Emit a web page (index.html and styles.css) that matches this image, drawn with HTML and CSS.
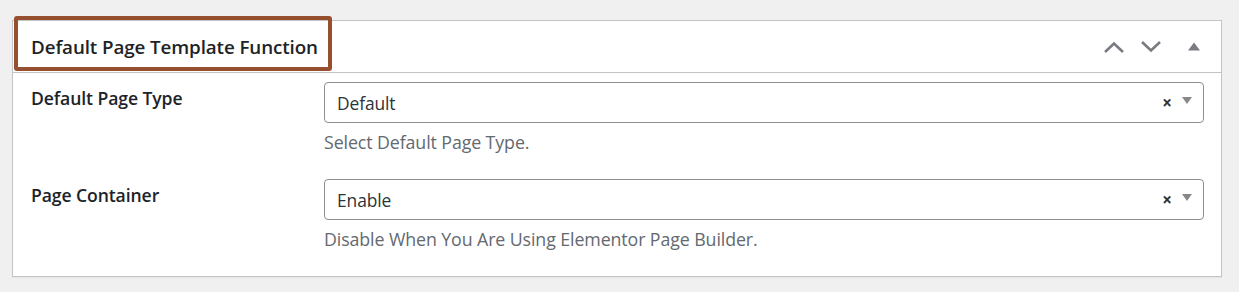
FILE: index.html
```html
<!DOCTYPE html>
<html>

<head>
    <link rel="stylesheet" href="styles.css">
</head>

<body>
    <div class="postbox">
        <div class="postboxHeader">
            <h2 class="boxTitle">Default Page Template Function</h2>
            <div class="handleActions">
                <button class="handleButton" type="button" aria-label="Move up">
                    <svg width="22" height="14" viewBox="0 0 22 14"><path d="M2 12 L11 3.5 L20 12" fill="none" stroke="#787c82" stroke-width="2.6"/></svg>
                </button>
                <button class="handleButton" type="button" aria-label="Move down">
                    <svg width="22" height="14" viewBox="0 0 22 14"><path d="M2 2 L11 10.5 L20 2" fill="none" stroke="#787c82" stroke-width="2.6"/></svg>
                </button>
                <button class="handleButton toggle" type="button" aria-label="Toggle panel">
                    <svg width="12" height="9" viewBox="0 0 12 9"><path d="M0 8.5 L6 0.5 L12 8.5 Z" fill="#787c82"/></svg>
                </button>
            </div>
            <span class="highlightFrame"></span>
        </div>

        <div class="postboxInside">
            <div class="fieldRow">
                <label class="fieldLabel">Default Page Type</label>
                <div class="fieldControl">
                    <div class="selectBox">
                        <span class="selectValue">Default</span>
                        <span class="selectClear">&times;</span>
                        <span class="selectArrow"></span>
                    </div>
                    <p class="description">Select Default Page Type.</p>
                </div>
            </div>

            <div class="fieldRow">
                <label class="fieldLabel">Page Container</label>
                <div class="fieldControl">
                    <div class="selectBox">
                        <span class="selectValue">Enable</span>
                        <span class="selectClear">&times;</span>
                        <span class="selectArrow"></span>
                    </div>
                    <p class="description">Disable When You Are Using Elementor Page Builder.</p>
                </div>
            </div>
        </div>
    </div>
</body>

</html>
```

FILE: styles.css
```css
body {
    margin: 0;
    padding: 20px 17px 15px 12px;
    background: #f0f0f1;
    font-family: "Open Sans", "Noto Sans", sans-serif;
    color: #1d2327;
}

.postbox {
    background: #fff;
    border: 1px solid #c3c4c7;
    box-shadow: 0 1px 1px rgba(0, 0, 0, 0.04);
}

.postboxHeader {
    display: flex;
    align-items: center;
    justify-content: space-between;
    height: 51px;
    border-bottom: 1px solid #c3c4c7;
    position: relative;
}

.boxTitle {
    margin: 0;
    padding: 0 0 0 18px;
    font-size: 18.8px;
    font-weight: 600;
    letter-spacing: -0.1px;
    color: #1d2327;
}

/* brown annotation frame drawn over the heading */
.highlightFrame {
    position: absolute;
    left: 1px;
    top: -5px;
    width: 318px;
    height: 55px;
    box-sizing: border-box;
    border: 4px solid #97502f;
    border-radius: 3px;
}

.handleActions {
    display: flex;
    align-items: center;
    padding-right: 19px;
}

.handleButton {
    background: none;
    border: none;
    padding: 0;
    width: 37px;
    height: 36px;
    display: flex;
    align-items: center;
    justify-content: center;
    cursor: pointer;
}

.handleButton.toggle {
    width: 33px;
    justify-content: flex-end;
    padding-right: 2px;
}

.postboxInside {
    padding: 9px 17px 25px 18px;
}

.fieldRow {
    display: grid;
    grid-template-columns: 293px 1fr;
    margin-bottom: 25px;
}

.fieldRow:last-child {
    margin-bottom: 0;
}

.fieldLabel {
    font-size: 17.6px;
    line-height: 24px;
    font-weight: 600;
    padding-top: 4px;
    letter-spacing: -0.1px;
}

.selectBox {
    display: flex;
    align-items: center;
    height: 41px;
    box-sizing: border-box;
    border: 1px solid #8c8f94;
    border-radius: 4px;
    padding: 0 11px 0 12px;
}

.selectValue {
    flex: 1;
    font-size: 17.4px;
    color: #2c3338;
    letter-spacing: -0.1px;
    padding-top: 1px;
}

.selectClear {
    font-size: 17px;
    font-weight: 700;
    color: #333;
    margin-right: 10px;
    line-height: 1;
}

.selectArrow {
    width: 0;
    height: 0;
    border-left: 5px solid transparent;
    border-right: 5px solid transparent;
    border-top: 7px solid #888;
    margin-top: -4px;
}

.description {
    margin: 7px 0 0 0;
    font-size: 17.8px;
    line-height: 24px;
    color: #646970;
    letter-spacing: -0.1px;
}
```
